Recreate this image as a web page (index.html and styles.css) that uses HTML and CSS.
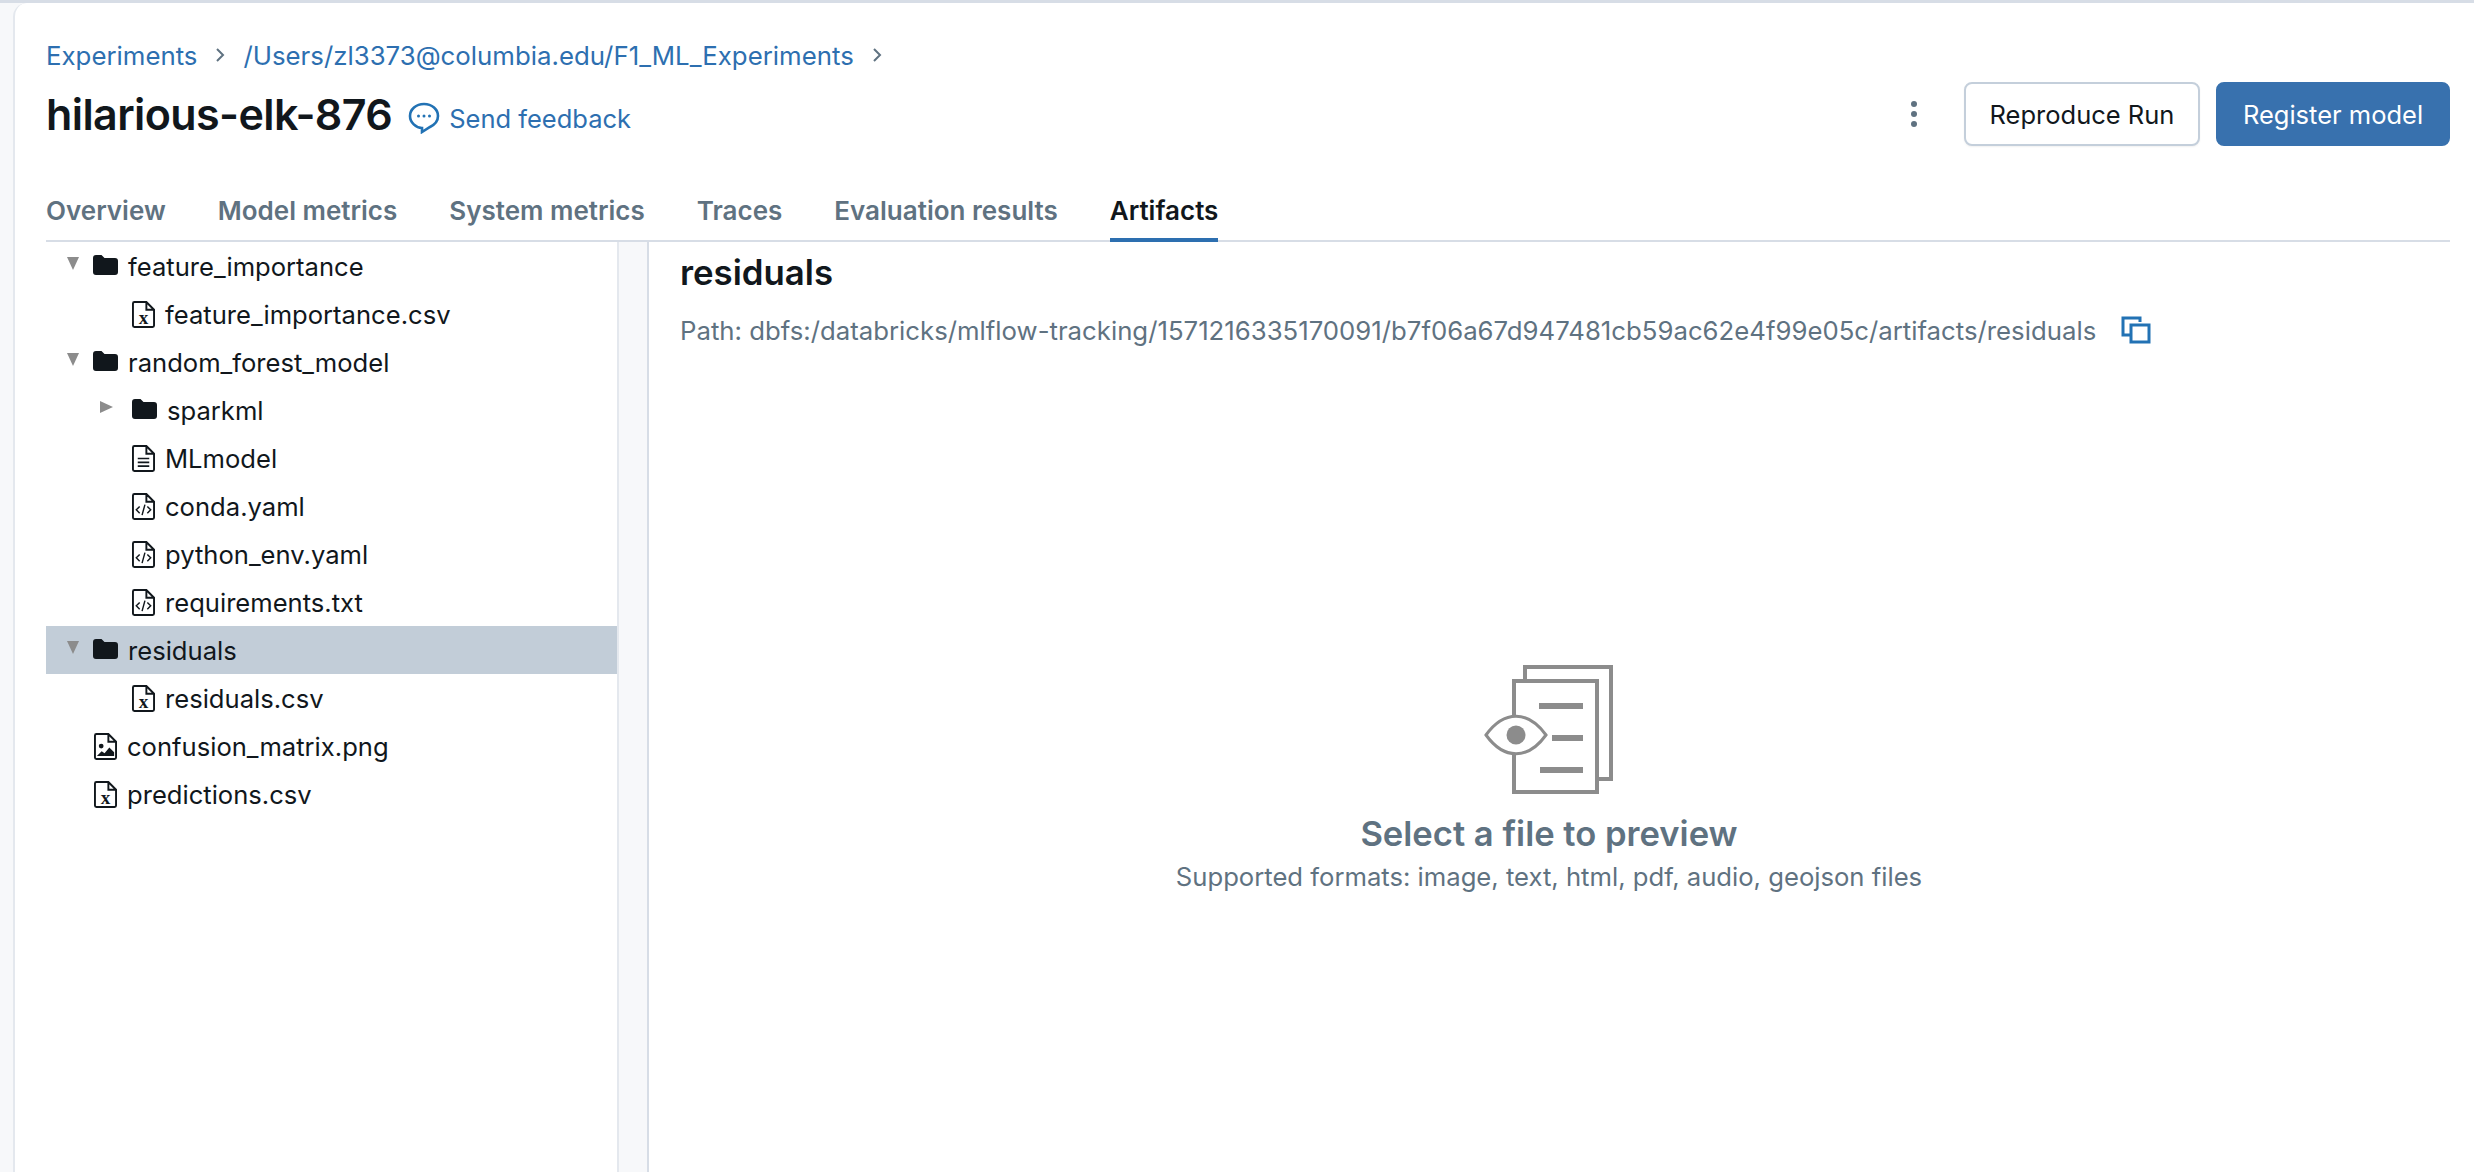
FILE: index.html
```html
<!DOCTYPE html>
<html lang="en">
<head>
  <meta charset="UTF-8" />
  <title>hilarious-elk-876</title>
  <link rel="stylesheet" href="styles.css">
</head>
<body>
  <svg class="icon-defs" width="0" height="0">
    <symbol id="folder" viewBox="0 0 25 20">
      <path d="M0 3a3 3 0 0 1 3-3h5.500l3 3H22a3 3 0 0 1 3 3v11a3 3 0 0 1-3 3H3a3 3 0 0 1-3-3z" fill="#11171c"/>
    </symbol>
    <symbol id="file-base" viewBox="0 0 24 28">
      <path d="M1 2.500A1.500 1.500 0 0 1 2.500 1H15l8 8v16.500a1.500 1.500 0 0 1-1.500 1.500h-19A1.500 1.500 0 0 1 1 25.500z M15 1v8h8" fill="none" stroke="#11171c" stroke-width="2"/>
    </symbol>
  </svg>

  <div class="page">
    <nav class="crumbs">
      <a href="#">Experiments</a>
      <svg class="crumb-sep" viewBox="0 0 10 16"><path d="M2 2l6 6-6 6" fill="none" stroke="#5f7281" stroke-width="2"/></svg>
      <a href="#">/Users/zl3373@columbia.edu/F1_ML_Experiments</a>
      <svg class="crumb-sep" viewBox="0 0 10 16"><path d="M2 2l6 6-6 6" fill="none" stroke="#5f7281" stroke-width="2"/></svg>
    </nav>

    <header class="title-row">
      <h1>hilarious-elk-876</h1>
      <a class="feedback" href="#">
        <svg class="feedback-icon" viewBox="0 0 32 32">
          <path d="M16 2C8 2 2 7.500 2 14s6 12 12 12v4l8-5c5-2.500 8-6.500 8-11 0-6.500-6-12-14-12z" fill="none" stroke="#2272b4" stroke-width="2.600"/>
          <circle cx="10.500" cy="14" r="1.500" fill="#2272b4"/><circle cx="16" cy="14" r="1.500" fill="#2272b4"/><circle cx="21.500" cy="14" r="1.500" fill="#2272b4"/>
        </svg>
        Send feedback
      </a>
      <div class="actions">
        <span class="kebab"><i></i><i></i><i></i></span>
        <button class="btn">Reproduce Run</button>
        <button class="btn btn-primary">Register model</button>
      </div>
    </header>

    <div class="tabs">
      <a href="#">Overview</a>
      <a href="#">Model metrics</a>
      <a href="#">System metrics</a>
      <a href="#">Traces</a>
      <a href="#">Evaluation results</a>
      <a href="#" class="active">Artifacts</a>
    </div>

    <main class="artifacts">
      <ul class="tree">
        <li class="row lvl-0"><span class="arrow down"></span><svg class="i-folder"><use href="#folder"/></svg>feature_importance</li>
        <li class="row lvl-1 file"><svg class="i-file" viewBox="0 0 24 28"><use href="#file-base"/><text x="12" y="24" class="i-x">x</text></svg>feature_importance.csv</li>
        <li class="row lvl-0"><span class="arrow down"></span><svg class="i-folder"><use href="#folder"/></svg>random_forest_model</li>
        <li class="row lvl-1"><span class="arrow right"></span><svg class="i-folder"><use href="#folder"/></svg>sparkml</li>
        <li class="row lvl-1 file"><svg class="i-file" viewBox="0 0 24 28"><use href="#file-base"/><path d="M6 14h12M6 18h12M6 22h12" stroke="#11171c" stroke-width="1.800"/></svg>MLmodel</li>
        <li class="row lvl-1 file"><svg class="i-file" viewBox="0 0 24 28"><use href="#file-base"/><path d="M8 14l-3.500 3.500L8 21M16 14l3.500 3.500L16 21M13.500 12l-3 11" fill="none" stroke="#11171c" stroke-width="1.500"/></svg>conda.yaml</li>
        <li class="row lvl-1 file"><svg class="i-file" viewBox="0 0 24 28"><use href="#file-base"/><path d="M8 14l-3.500 3.500L8 21M16 14l3.500 3.500L16 21M13.500 12l-3 11" fill="none" stroke="#11171c" stroke-width="1.500"/></svg>python_env.yaml</li>
        <li class="row lvl-1 file"><svg class="i-file" viewBox="0 0 24 28"><use href="#file-base"/><path d="M8 14l-3.500 3.500L8 21M16 14l3.500 3.500L16 21M13.500 12l-3 11" fill="none" stroke="#11171c" stroke-width="1.500"/></svg>requirements.txt</li>
        <li class="row lvl-0 selected"><span class="arrow down"></span><svg class="i-folder"><use href="#folder"/></svg>residuals</li>
        <li class="row lvl-1 file"><svg class="i-file" viewBox="0 0 24 28"><use href="#file-base"/><text x="12" y="24" class="i-x">x</text></svg>residuals.csv</li>
        <li class="row lvl-root file"><svg class="i-file" viewBox="0 0 24 28"><use href="#file-base"/><circle cx="7.500" cy="13.500" r="2.500" fill="#11171c"/><path d="M3 24l5-5 3 2 5-6 5 5v4z" fill="#11171c"/></svg>confusion_matrix.png</li>
        <li class="row lvl-root file"><svg class="i-file" viewBox="0 0 24 28"><use href="#file-base"/><text x="12" y="24" class="i-x">x</text></svg>predictions.csv</li>
      </ul>
      <div class="splitter"></div>
      <section class="preview">
        <h2>residuals</h2>
        <div class="path">
          <span>Path: dbfs:/databricks/mlflow-tracking/1571216335170091/b7f06a67d947481cb59ac62e4f99e05c/artifacts/residuals</span>
          <svg class="copy-icon" viewBox="0 0 30 28">
            <path d="M19 6V2H2v17h7" fill="none" stroke="#2272b4" stroke-width="3"/>
            <rect x="10" y="9" width="18" height="17" fill="none" stroke="#2272b4" stroke-width="3"/>
          </svg>
        </div>
        <div class="empty">
          <svg class="empty-icon" viewBox="0 0 130 130">
            <path d="M41 17V2h86v112h-14" fill="none" stroke="#8c8c8c" stroke-width="4"/>
            <path d="M30 50V16h83v111H30V88" fill="none" stroke="#8c8c8c" stroke-width="4"/>
            <path d="M2 70c18-25 42-25 60 0-18 25-42 25-60 0z" fill="none" stroke="#8c8c8c" stroke-width="3"/>
            <circle cx="32" cy="70" r="9.500" fill="#8c8c8c"/>
            <path d="M55 41h44M68 73h31M56 105h43" stroke="#8c8c8c" stroke-width="6"/>
          </svg>
          <h3>Select a file to preview</h3>
          <p>Supported formats: image, text, html, pdf, audio, geojson files</p>
        </div>
      </section>
    </main>
  </div>
</body>
</html>
```

FILE: styles.css
```css
* {
  box-sizing: border-box;
}

html, body {
  height: 100%;
}

body {
  margin: 0;
  height: 1172px;
  overflow: hidden;
  background-color: #f7f8fa;
  color: #11171c;
  font-family: "Inter", sans-serif;
  padding: 0 0 0 13px;
  border-top: 3px solid #d7dde6;
}

a {
  color: #2d6fb0;
  text-decoration: none;
}

.icon-defs {
  display: block;
  height: 0;
}

.page {
  height: 100%;
  background: #fff;
  border-radius: 14px 0 0 0;
  border-left: 2px solid #e4e8ee;
  padding: 0 24px 0 31px;
  display: flex;
  flex-direction: column;
}

.crumbs {
  display: flex;
  align-items: center;
  height: 30px;
  margin-top: 37px;
  font-size: 25.8px;
}

.crumb-sep {
  width: 12px;
  height: 16px;
  margin: 0 17px 0 17px;
}

.title-row {
  display: flex;
  align-items: center;
  height: 66px;
  margin-top: 11px;
}

h1 {
  margin: 0;
  font-size: 43px;
  font-weight: 600;
  letter-spacing: -0.6px;
  white-space: nowrap;
}

.feedback {
  display: flex;
  align-items: center;
  margin-left: 16px;
  font-size: 25.5px;
  padding-top: 8px;
}

.feedback-icon {
  width: 32px;
  height: 32px;
  margin-right: 9px;
}

.actions {
  margin-left: auto;
  display: flex;
  align-items: center;
  gap: 16px;
}

.kebab {
  display: flex;
  flex-direction: column;
  gap: 4px;
  margin-right: 31px;
}

.kebab i {
  width: 6px;
  height: 6px;
  border-radius: 50%;
  background: #5f7281;
}

.btn {
  height: 64px;
  width: 236px;
  border: 2px solid #c4cfdb;
  border-radius: 8px;
  background: #fff;
  color: #11171c;
  font-family: inherit;
  font-size: 25.5px;
  box-shadow: 0 1px 2px rgba(0, 0, 0, 0.06);
}

.btn-primary {
  width: 234px;
  background: #3871ae;
  border-color: #3871ae;
  color: #fff;
  box-shadow: none;
}

.tabs {
  display: flex;
  gap: 52px;
  height: 62px;
  margin-top: 33px;
  border-bottom: 2px solid #d7dde6;
  font-size: 26px;
  font-weight: 600;
}

.tabs a {
  color: #5f7281;
  padding-top: 15px;
  height: 62px;
}

.tabs a.active {
  color: #11171c;
  border-bottom: 4px solid #2d6fb0;
}

.artifacts {
  flex: 1;
  display: flex;
  min-height: 0;
}

.tree {
  list-style: none;
  margin: 0;
  padding: 0;
  width: 571px;
  flex: none;
  font-size: 25.6px;
}

.row {
  display: flex;
  align-items: center;
  height: 48.05px;
  white-space: nowrap;
}

.lvl-root {
  padding-left: 48px;
}

.lvl-0 {
  padding-left: 21px;
}

.lvl-1 {
  padding-left: 54px;
}

.lvl-1.file {
  padding-left: 86px;
}

.selected {
  background: #c2cdd8;
}

.arrow {
  width: 0;
  height: 0;
  flex: none;
  margin-bottom: 6px;
}

.arrow.down {
  border-left: 6.5px solid transparent;
  border-right: 6.5px solid transparent;
  border-top: 13px solid #8c8c8c;
  margin-right: 14px;
}

.arrow.right {
  border-top: 6.5px solid transparent;
  border-bottom: 6.5px solid transparent;
  border-left: 13px solid #8c8c8c;
  margin-right: 19px;
}

.i-folder {
  width: 25px;
  height: 20px;
  margin-right: 10px;
  margin-bottom: 2px;
  flex: none;
}

.i-file {
  width: 23px;
  height: 27px;
  margin-right: 10px;
  flex: none;
}

.i-x {
  font-family: "Liberation Serif", serif;
  font-size: 20px;
  font-weight: 700;
  text-anchor: middle;
  fill: #11171c;
}

.splitter {
  width: 32px;
  flex: none;
  background: #f7f8fa;
  border-left: 2px solid #e4e8ee;
  border-right: 2px solid #d7dde6;
}

.preview {
  flex: 1;
  min-width: 0;
  display: flex;
  flex-direction: column;
  padding-left: 31px;
}

h2 {
  margin: 10px 0 0;
  font-size: 34.8px;
  line-height: 40px;
  font-weight: 600;
}

.path {
  display: flex;
  align-items: center;
  margin-top: 21px;
  height: 34px;
  color: #5f7281;
  font-size: 25.75px;
  white-space: nowrap;
}

.copy-icon {
  width: 30px;
  height: 28px;
  margin-left: 25px;
}

.empty {
  display: flex;
  flex-direction: column;
  align-items: center;
  margin-top: 318px;
  padding-right: 32px;
}

.empty-icon {
  width: 130px;
  height: 130px;
}

h3 {
  margin: 17px 0 0;
  color: #5f7281;
  font-size: 34.6px;
  line-height: 42px;
  font-weight: 600;
}

.empty p {
  margin: 7px 0 0;
  color: #5f7281;
  font-size: 25.65px;
  line-height: 32px;
}
```
